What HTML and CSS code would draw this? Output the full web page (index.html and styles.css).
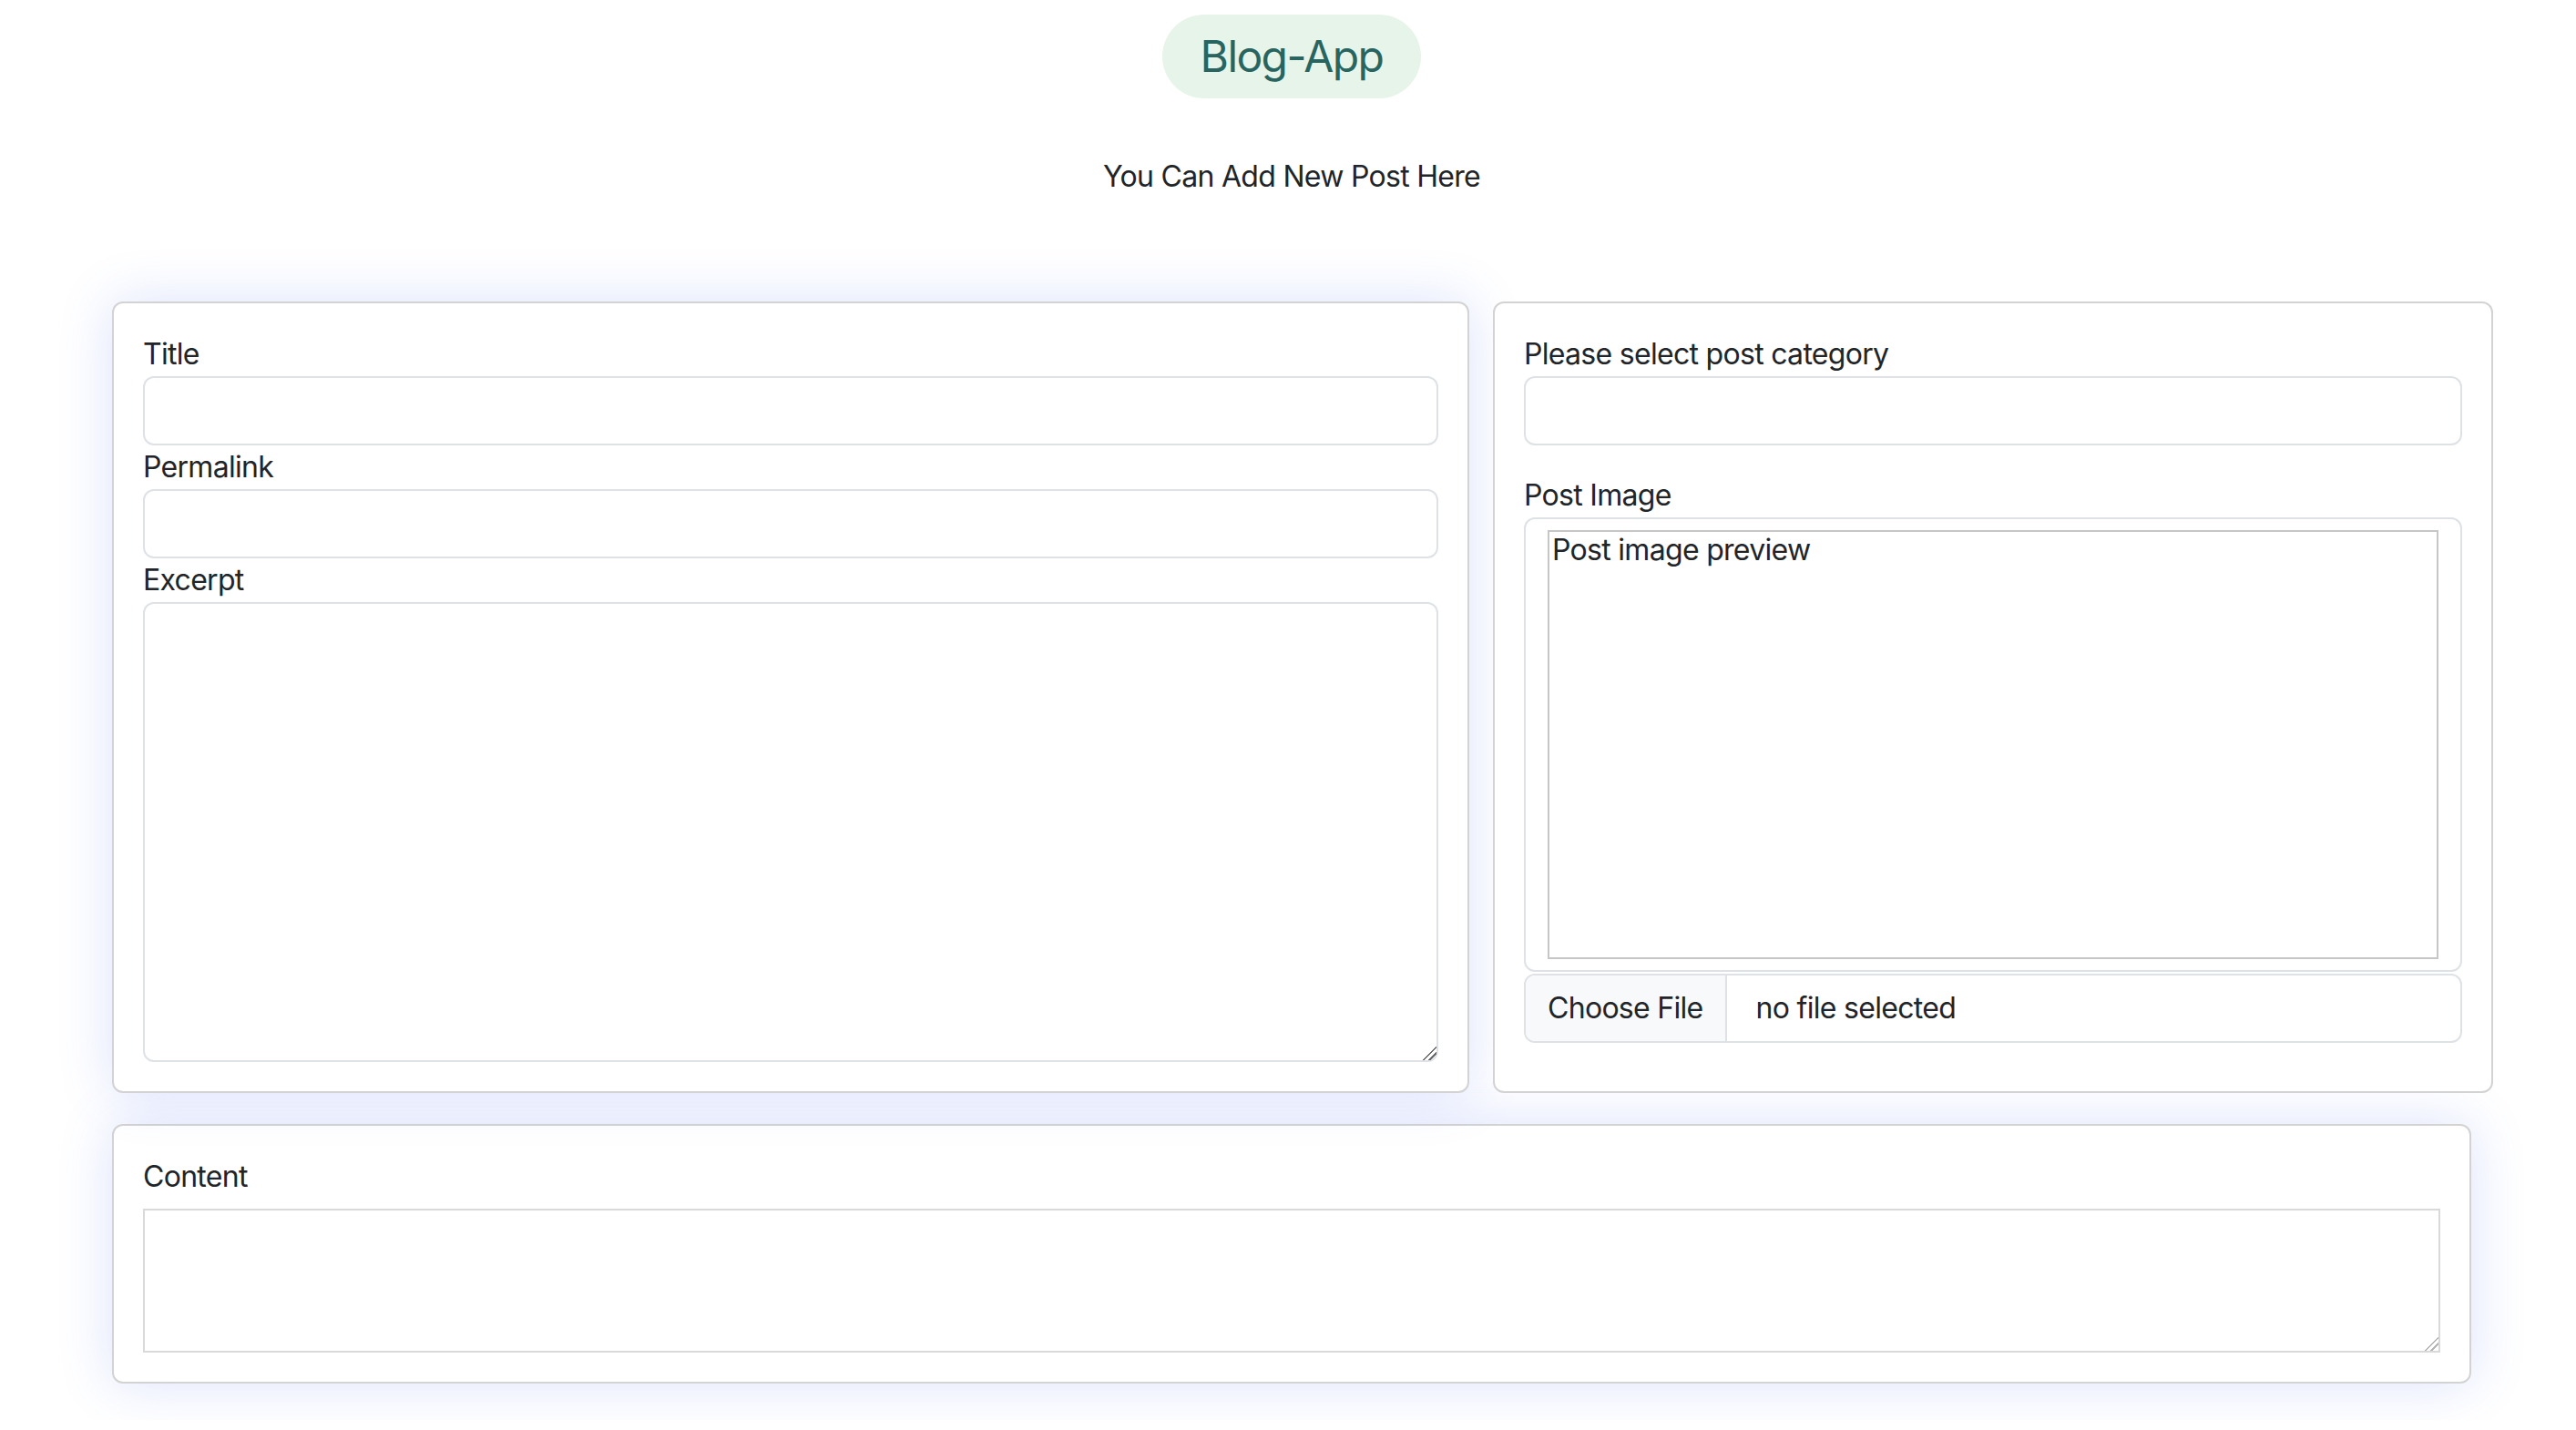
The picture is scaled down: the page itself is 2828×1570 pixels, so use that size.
FILE: index.html
```html
<!DOCTYPE html>
<html lang="en">
<head>
<meta charset="utf-8">
<title>Blog-App</title>
<link rel="stylesheet" href="styles.css">
</head>
<body>
<div class="page">
  <header class="head">
    <div class="brand">Blog-App</div>
    <p class="sub">You Can Add New Post Here</p>
  </header>
  <main class="container">
    <div class="row">
      <section class="card card-main shadowed">
        <label class="lbl">Title</label>
        <input class="field" type="text">
        <label class="lbl">Permalink</label>
        <input class="field" type="text">
        <label class="lbl">Excerpt</label>
        <textarea class="field area"></textarea>
      </section>
      <section class="card card-side">
        <label class="lbl">Please select post category</label>
        <div class="field select"></div>
        <label class="lbl">Post Image</label>
        <div class="field preview">
          <div class="img">Post image preview</div>
        </div>
        <div class="field file">
          <span class="file-btn">Choose File</span>
          <span class="file-name">no file selected</span>
        </div>
      </section>
    </div>
    <section class="card content shadowed">
      <label class="lbl">Content</label>
      <textarea class="plain"></textarea>
    </section>
  </main>
</div>
</body>
</html>
```
FILE: styles.css
```css
html, body {
  margin: 0;
  padding: 0;
  background: #ffffff;
}
body {
  font-family: Inter, "Noto Sans", "Liberation Sans", sans-serif;
  font-size: 32px;
  line-height: 1.5;
  letter-spacing: -0.7px;
  color: #212529;
}
.page {
  padding: 16px 0 40px 8px;
}
.head {
  display: flex;
  flex-direction: column;
  align-items: center;
}
.brand {
  height: 92px;
  line-height: 92px;
  padding: 0 42px;
  border-radius: 46px;
  background: #e6f4ea;
  color: #286560;
  font-size: 48px;
  letter-spacing: -1.6px;
}
.sub {
  margin: 62px 0 0;
  line-height: 48px;
  font-size: 32px;
}
.container {
  margin: 113px 115px 0;
}
.row {
  display: flex;
  gap: 26px;
  margin-right: -24px;
  align-items: stretch;
}
.card {
  background: #ffffff;
  border: 2px solid #d3d3d3;
  border-radius: 12px;
  padding: 32px;
  box-sizing: border-box;
}
.shadowed {
  box-shadow: 0 0 60px rgba(80, 110, 240, 0.2);
}
.card-main {
  flex: 0 0 1490px;
}
.card-side {
  flex: 1 1 0;
  min-width: 0;
}
.lbl {
  display: block;
  line-height: 48px;
}
.field {
  display: block;
  width: 100%;
  height: 76px;
  box-sizing: border-box;
  margin: 0;
  border: 2px solid #dee2e6;
  border-radius: 12px;
  background: #ffffff;
  font: inherit;
  color: inherit;
}
.area {
  height: 505px;
  resize: vertical;
}
.area::-webkit-resizer {
  background: linear-gradient(135deg, transparent 48%, #6b6b6b 48%, #6b6b6b 56%, transparent 56%, transparent 70%, #6b6b6b 70%, #6b6b6b 78%, transparent 78%);
}
.plain::-webkit-resizer {
  background: linear-gradient(135deg, transparent 48%, #b5b5b5 48%, #b5b5b5 56%, transparent 56%, transparent 70%, #b5b5b5 70%, #b5b5b5 78%, transparent 78%);
}
.select {
  margin-bottom: 31px;
}
.preview {
  height: auto;
  padding: 12px 24px;
}
.img {
  height: 471px;
  box-sizing: border-box;
  border: 2px solid #c6c6c6;
  padding: 0 3px;
  line-height: 40px;
}
.file {
  margin-top: 2px;
  display: flex;
  align-items: stretch;
  overflow: hidden;
}
.file-btn {
  display: flex;
  align-items: center;
  padding: 0 24px;
  background: #f8f9fa;
  border-right: 2px solid #dee2e6;
}
.file-name {
  display: flex;
  align-items: center;
  padding-left: 32px;
}
.content {
  margin-top: 34px;
}
.plain {
  display: block;
  width: 100%;
  height: 158px;
  box-sizing: border-box;
  margin: 11px 0 0;
  border: 2px solid #d9d9d9;
  border-radius: 0;
  font: inherit;
}
```
